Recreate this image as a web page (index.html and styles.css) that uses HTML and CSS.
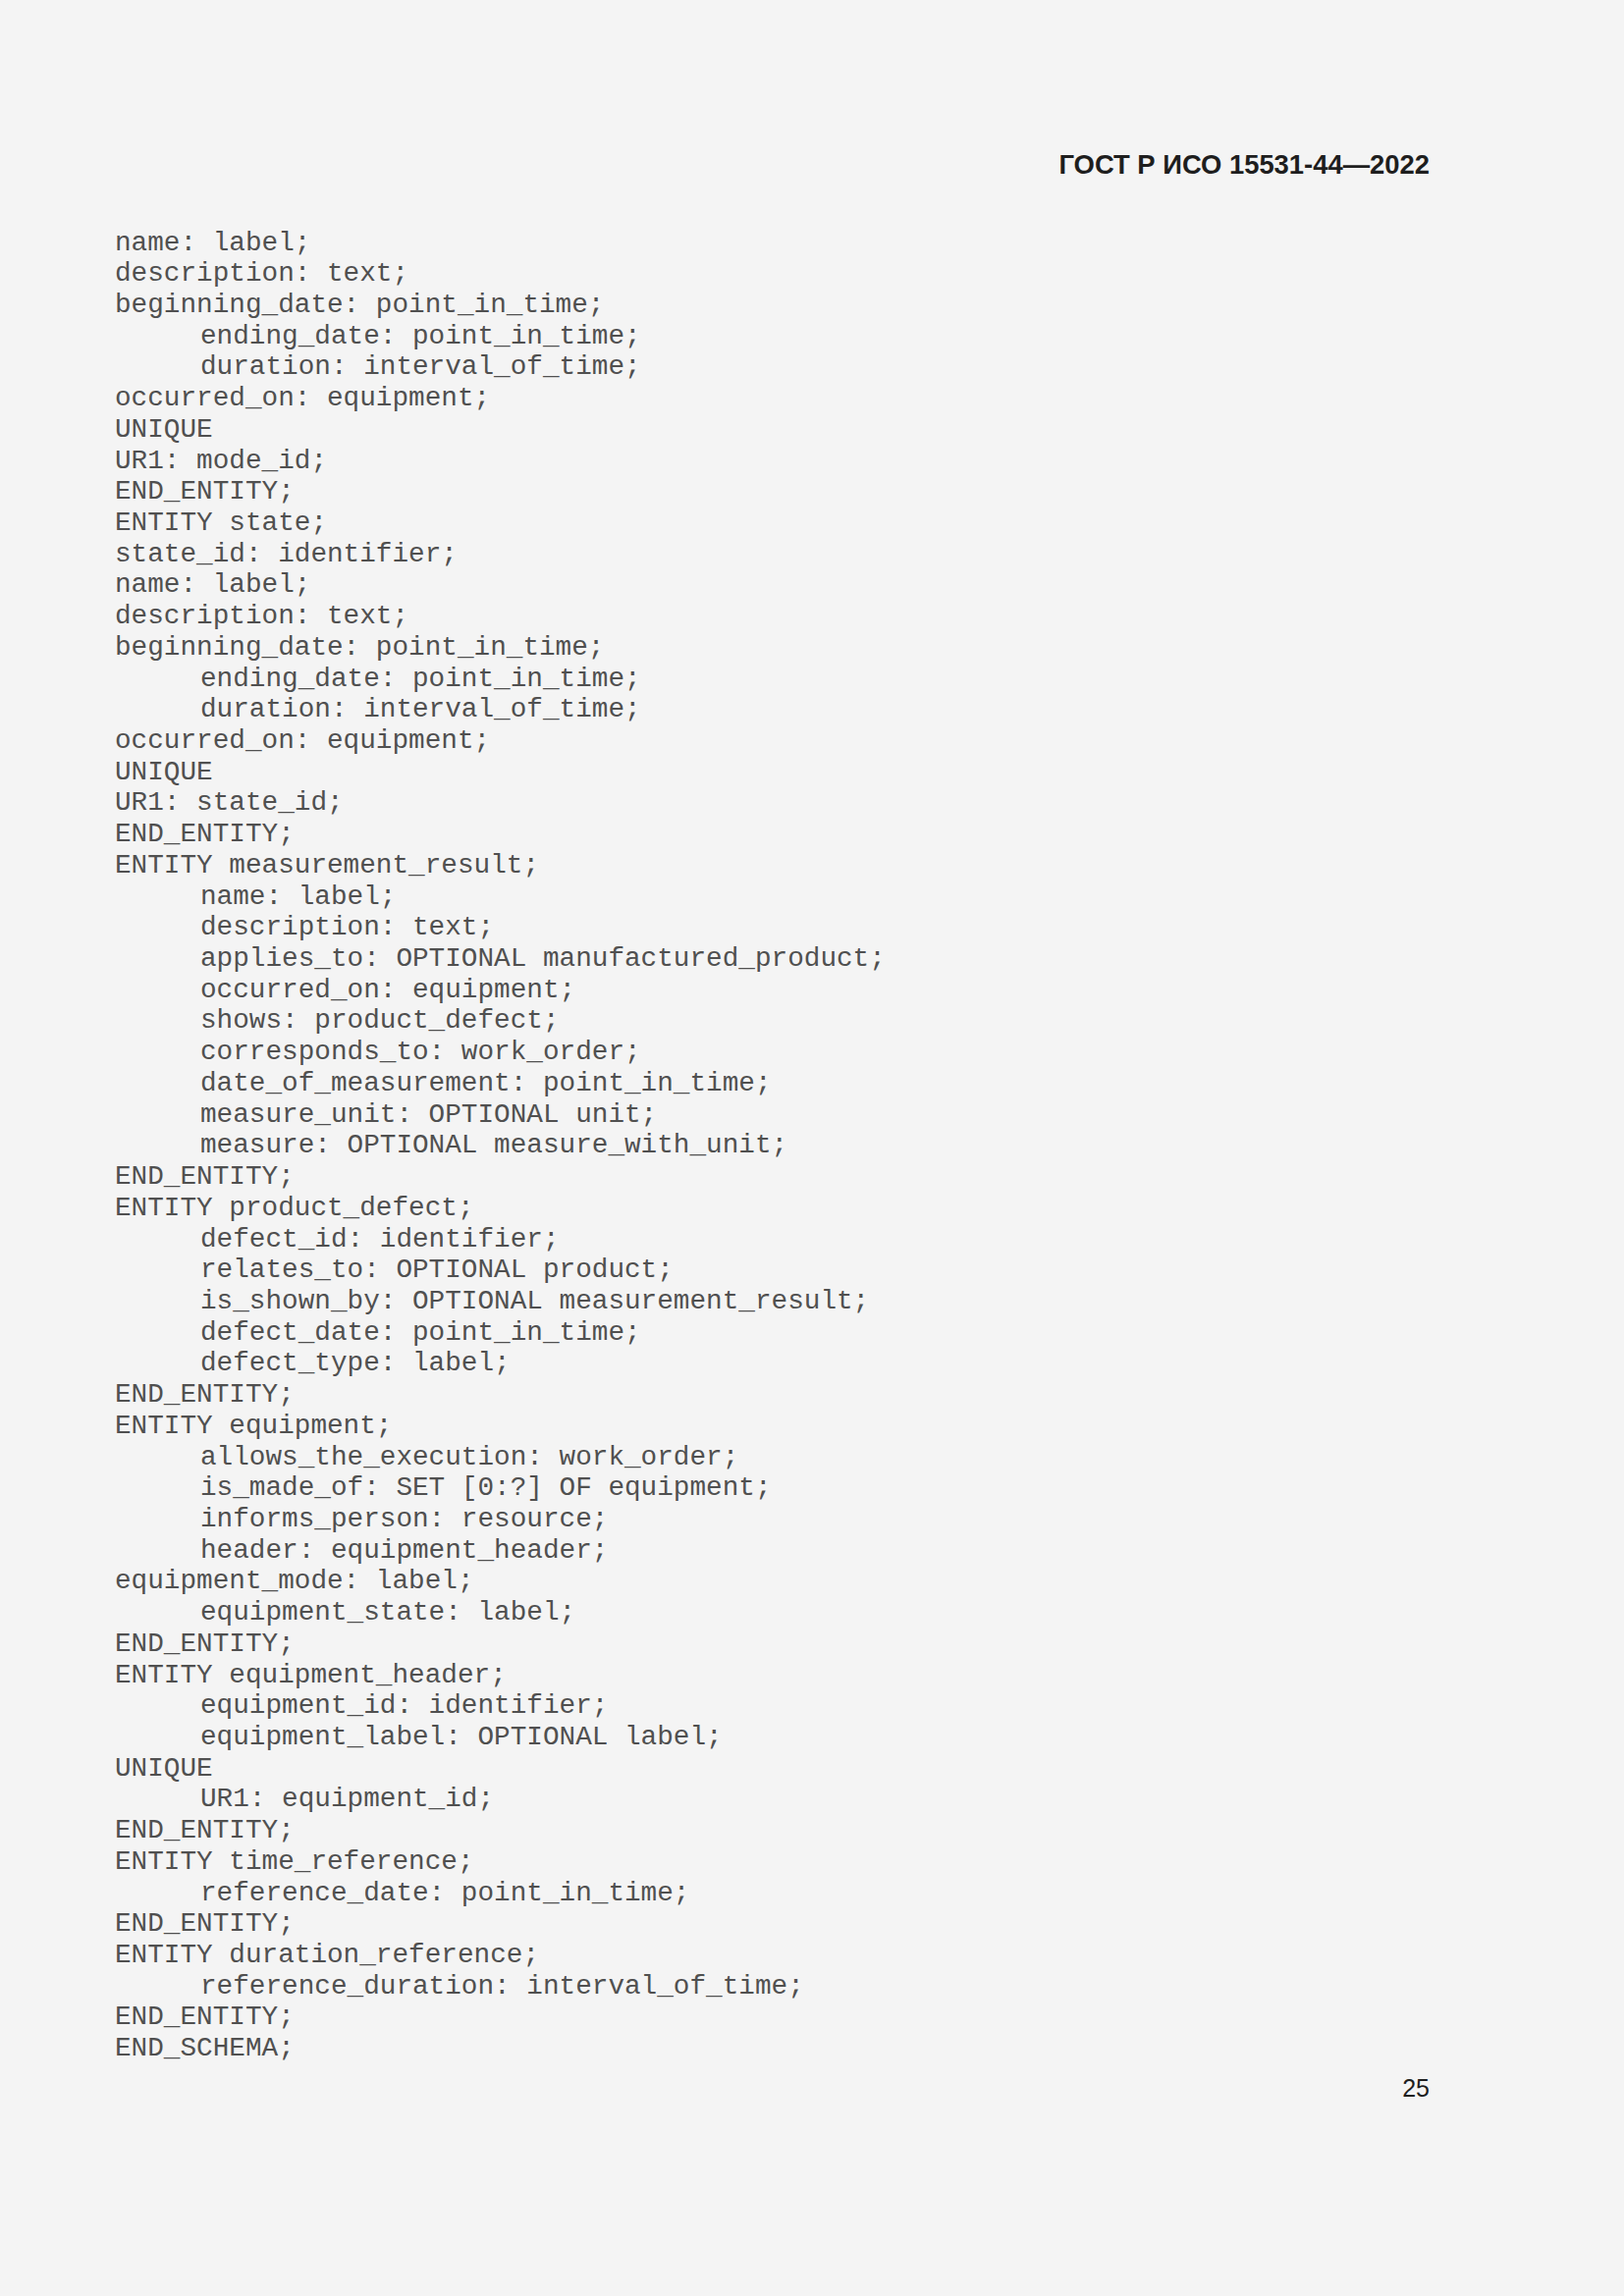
FILE: index.html
```html
<!DOCTYPE html>
<html lang="ru">
<head>
<meta charset="utf-8">
<title>ГОСТ Р ИСО 15531-44—2022</title>
<link rel="stylesheet" href="styles.css">
</head>
<body>
<div class="page">
  <header class="doc-header">ГОСТ Р ИСО 15531-44—2022</header>
  <div class="code">
    <div class="ln">name: label;</div>
    <div class="ln">description: text;</div>
    <div class="ln">beginning_date: point_in_time;</div>
    <div class="ln in">ending_date: point_in_time;</div>
    <div class="ln in">duration: interval_of_time;</div>
    <div class="ln">occurred_on: equipment;</div>
    <div class="ln">UNIQUE</div>
    <div class="ln">UR1: mode_id;</div>
    <div class="ln">END_ENTITY;</div>
    <div class="ln">ENTITY state;</div>
    <div class="ln">state_id: identifier;</div>
    <div class="ln">name: label;</div>
    <div class="ln">description: text;</div>
    <div class="ln">beginning_date: point_in_time;</div>
    <div class="ln in">ending_date: point_in_time;</div>
    <div class="ln in">duration: interval_of_time;</div>
    <div class="ln">occurred_on: equipment;</div>
    <div class="ln">UNIQUE</div>
    <div class="ln">UR1: state_id;</div>
    <div class="ln">END_ENTITY;</div>
    <div class="ln">ENTITY measurement_result;</div>
    <div class="ln in">name: label;</div>
    <div class="ln in">description: text;</div>
    <div class="ln in">applies_to: OPTIONAL manufactured_product;</div>
    <div class="ln in">occurred_on: equipment;</div>
    <div class="ln in">shows: product_defect;</div>
    <div class="ln in">corresponds_to: work_order;</div>
    <div class="ln in">date_of_measurement: point_in_time;</div>
    <div class="ln in">measure_unit: OPTIONAL unit;</div>
    <div class="ln in">measure: OPTIONAL measure_with_unit;</div>
    <div class="ln">END_ENTITY;</div>
    <div class="ln">ENTITY product_defect;</div>
    <div class="ln in">defect_id: identifier;</div>
    <div class="ln in">relates_to: OPTIONAL product;</div>
    <div class="ln in">is_shown_by: OPTIONAL measurement_result;</div>
    <div class="ln in">defect_date: point_in_time;</div>
    <div class="ln in">defect_type: label;</div>
    <div class="ln">END_ENTITY;</div>
    <div class="ln">ENTITY equipment;</div>
    <div class="ln in">allows_the_execution: work_order;</div>
    <div class="ln in">is_made_of: SET [0:?] OF equipment;</div>
    <div class="ln in">informs_person: resource;</div>
    <div class="ln in">header: equipment_header;</div>
    <div class="ln">equipment_mode: label;</div>
    <div class="ln in">equipment_state: label;</div>
    <div class="ln">END_ENTITY;</div>
    <div class="ln">ENTITY equipment_header;</div>
    <div class="ln in">equipment_id: identifier;</div>
    <div class="ln in">equipment_label: OPTIONAL label;</div>
    <div class="ln">UNIQUE</div>
    <div class="ln in">UR1: equipment_id;</div>
    <div class="ln">END_ENTITY;</div>
    <div class="ln">ENTITY time_reference;</div>
    <div class="ln in">reference_date: point_in_time;</div>
    <div class="ln">END_ENTITY;</div>
    <div class="ln">ENTITY duration_reference;</div>
    <div class="ln in">reference_duration: interval_of_time;</div>
    <div class="ln">END_ENTITY;</div>
    <div class="ln">END_SCHEMA;</div>
  </div>
  <footer class="page-num">25</footer>
</div>
</body>
</html>
```

FILE: styles.css
```css
html, body {
  margin: 0;
  padding: 0;
  background: #f4f4f4;
}
.page {
  width: 1654px;
  height: 2339px;
  box-sizing: border-box;
  padding: 153px 198px 0 117px;
  display: flex;
  flex-direction: column;
}
.doc-header {
  font-family: "Liberation Sans", Arial, sans-serif;
  font-weight: bold;
  font-size: 27.4px;
  line-height: 30px;
  color: #1e1e1e;
  text-align: right;
}
.code {
  margin-top: 48.5px;
  font-family: "Liberation Mono", "Courier New", monospace;
  font-size: 27.7px;
  line-height: 31.72px;
  color: #505050;
}
.ln {
  white-space: pre;
  height: 31.72px;
}
.ln.in {
  padding-left: 87px;
}
.page-num {
  margin-top: 10px;
  font-family: "Liberation Sans", Arial, sans-serif;
  font-size: 25px;
  line-height: 29px;
  color: #1e1e1e;
  text-align: right;
}
```
